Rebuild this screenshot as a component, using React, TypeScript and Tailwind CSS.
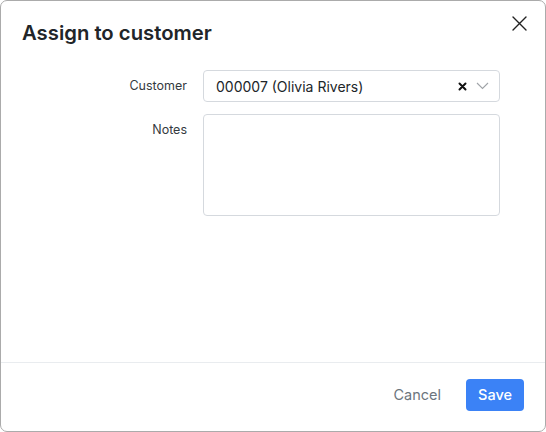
import React from "react";

export default function App() {
  return (
    <div
      className="w-[546px] h-[432px] bg-white border border-[#ababab] rounded-[7px] flex flex-col overflow-hidden"
      style={{ fontFamily: "Inter, 'Noto Sans', sans-serif" }}
    >
      <div className="flex items-start justify-between pl-[21px] pr-[18px] pt-[18px]">
        <h1 className="text-[20.3px] leading-[28px] font-semibold text-[#212529]">
          Assign to customer
        </h1>
        <button className="mt-[-4px] w-[16px] h-[16px] flex items-center justify-center text-[#222]">
          <svg width="15" height="15" viewBox="0 0 15 15" fill="none" stroke="currentColor" strokeWidth="1.4" strokeLinecap="round">
            <path d="M1 1L14 14M14 1L1 14" />
          </svg>
        </button>
      </div>

      <div className="flex-1 pt-[23px] pl-[20px] pr-[45px] flex flex-col gap-[12px]">
        <div className="flex items-center gap-[16px]">
          <label className="w-[166px] text-right text-[12.5px] text-[#343a40]">Customer</label>
          <div className="w-[297px] h-[32px] border border-[#d5d9de] rounded-[4px] flex items-center pl-[12px] pr-[10px]">
            <span className="flex-1 text-[14px] text-[#212529]">000007 (Olivia Rivers)</span>
            <svg width="9" height="9" viewBox="0 0 9 9" className="mr-[9px]" stroke="#111" strokeWidth="2" strokeLinecap="round">
              <path d="M1.5 1.5L7.5 7.5M7.5 1.5L1.5 7.5" />
            </svg>
            <svg width="13" height="8" viewBox="0 0 13 8" fill="none" stroke="#a0a4a8" strokeWidth="1.1">
              <path d="M1 1L6.5 6.5L12 1" />
            </svg>
          </div>
        </div>
        <div className="flex items-start gap-[16px]">
          <label className="w-[166px] text-right text-[12.5px] text-[#343a40] pt-[7px]">Notes</label>
          <textarea className="w-[297px] h-[102px] border border-[#d5d9de] rounded-[4px] resize-none outline-none" />
        </div>
      </div>

      <div className="border-t border-[#e9ecef] h-[69px] flex items-center justify-end pr-[21px] pb-[5px] gap-[13px]">
        <button className="h-[31px] px-[12px] text-[14.5px] text-[#6c757d]">Cancel</button>
        <button className="h-[32px] w-[58px] rounded-[4px] bg-[#3b82f6] text-white text-[14.5px] font-medium">
          Save
        </button>
      </div>
    </div>
  );
}
